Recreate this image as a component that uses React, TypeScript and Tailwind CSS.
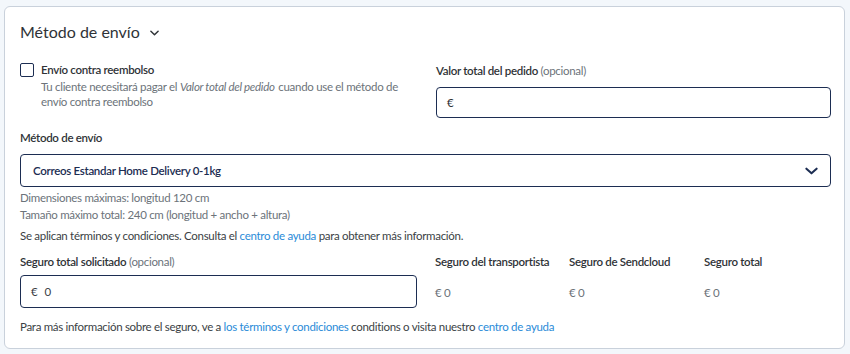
import React from "react";

export default function App() {
  return (
    <div className="w-[850px] h-[354px] bg-[#f3f7fb] pt-[6px] pl-[4px] pr-[5px] text-[11.5px] tracking-[-0.3px] leading-[16px] text-[#3b3f45]" style={{ fontFamily: "Lato, 'Open Sans', sans-serif" }}>
      <div className="h-[343px] bg-white border border-[#c9d1db] rounded-[6px] pl-[15px] pr-[13px] pt-[14px]">
        <div className="flex items-center gap-[10px] h-[22px]">
          <h2 className="text-[16px] tracking-normal text-[#2f3337]">Método de envío</h2>
          <svg viewBox="0 0 10 6" className="w-[9px] h-[6px] text-[#2f3337] mt-[2px]" fill="none" stroke="currentColor" strokeWidth={1.6} strokeLinecap="round" strokeLinejoin="round">
            <path d="M1 1l4 4 4-4" />
          </svg>
        </div>

        <div className="flex mt-[17px]">
          <div className="w-[416px] flex items-start gap-[7px] pt-[2px]">
            <div className="w-[14px] h-[14px] border border-[#1c2d52] rounded-[2px] mt-[1px] shrink-0" />
            <div>
              <div className="font-semibold text-[#2f3337]">Envío contra reembolso</div>
              <div className="text-[#6c737a] leading-[15px] mt-[1px] pr-[12px]">
                Tu cliente necesitará pagar el <i className="pr-[1px]">Valor total del pedido</i> cuando use el método de envío contra reembolso
              </div>
            </div>
          </div>
          <div className="flex-1">
            <div className="pt-[3px]">
              <span className="font-semibold text-[#2f3337]">Valor total del pedido</span>{" "}
              <span className="text-[#6c737a]">(opcional)</span>
            </div>
            <div className="mt-[8px] h-[31px] border border-[#1c2d52] rounded-[4px] flex items-center px-[10px] text-[#2f3337]">€</div>
          </div>
        </div>

        <div className="mt-[12px] font-semibold text-[#2f3337]">Método de envío</div>
        <div className="mt-[8px] h-[33px] border border-[#1c2d52] rounded-[4px] flex items-center justify-between pl-[12px] pr-[12px]">
          <span className="font-semibold text-[#1c2d52]">Correos Estandar Home Delivery 0-1kg</span>
          <svg viewBox="0 0 14 8" className="w-[13px] h-[8px] text-[#1c2d52]" fill="none" stroke="currentColor" strokeWidth={2.2} strokeLinecap="round" strokeLinejoin="round">
            <path d="M1.5 1.5l5.5 5 5.5-5" />
          </svg>
        </div>
        <div className="mt-[2px] text-[#6c737a] leading-[17px]">
          <div>Dimensiones máximas: longitud 120 cm</div>
          <div>Tamaño máximo total: 240 cm (longitud + ancho + altura)</div>
        </div>
        <div className="mt-[5px] text-[#3b3f45]">
          Se aplican términos y condiciones. Consulta el <span className="text-[#2a8bd8]">centro de ayuda</span> para obtener más información.
        </div>

        <div className="flex mt-[10px]">
          <div className="w-[397px]">
            <div>
              <span className="font-semibold text-[#2f3337]">Seguro total solicitado</span>{" "}
              <span className="text-[#6c737a]">(opcional)</span>
            </div>
            <div className="mt-[5px] h-[33px] border border-[#1c2d52] rounded-[4px] flex items-center px-[10px] gap-[7px] text-[#3b3f45]">
              <span>€</span>
              <span>0</span>
            </div>
          </div>
          <div className="ml-[18px] flex">
            {[
              ["Seguro del transportista", "w-[134px]"],
              ["Seguro de Sendcloud", "w-[135px]"],
              ["Seguro total", "w-[120px]"],
            ].map(([t, w]) => (
              <div key={t} className={w}>
                <div className="font-semibold text-[#2f3337]">{t}</div>
                <div className="mt-[15px] text-[#6c737a]">€ 0</div>
              </div>
            ))}
          </div>
        </div>

        <div className="mt-[11px] text-[#3b3f45]">
          Para más información sobre el seguro, ve a <span className="text-[#2a8bd8]">los términos y condiciones</span> conditions o visita nuestro <span className="text-[#2a8bd8]">centro de ayuda</span>
        </div>
      </div>
    </div>
  );
}
